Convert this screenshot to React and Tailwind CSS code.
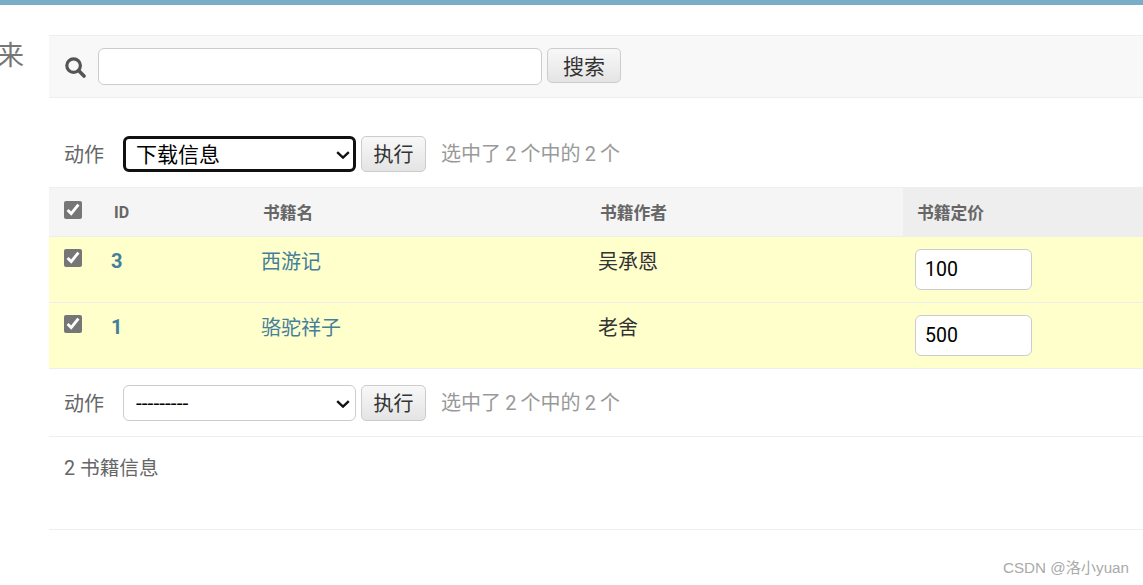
import React from 'react';

const books = [
  { id: 3, name: '西游记', author: '吴承恩', price: '100' },
  { id: 1, name: '骆驼祥子', author: '老舍', price: '500' },
];

const Check = () => (
  <input
    type="checkbox"
    defaultChecked
    className="block w-[18px] h-[18px] m-0 accent-[#767676]"
  />
);

const ActionBar = ({ focused, value, options }) => (
  <div className="flex items-center h-9 pl-[15px]">
    <span className="text-[20px] text-[#666] w-[59px] leading-none pt-[1px]">动作</span>
    <div className="relative w-[233px] h-9">
      <select
        defaultValue={value}
        className={`appearance-none block w-full h-full pt-[1px] rounded-[6px] bg-white text-black text-[21px] ${
          focused ? 'border-[3px] border-[#111] pl-[10px]' : 'border border-[#ccc] pl-[12px]'
        }`}
      >
        {options.map((o) => (
          <option key={o}>{o}</option>
        ))}
      </select>
      <svg className="absolute right-[6px] top-[15px] pointer-events-none" width="14" height="8" viewBox="0 0 14 8" fill="none">
        <path d="M1.2 1.2 L7 6.6 L12.8 1.2" stroke="#111" strokeWidth="2.4" />
      </svg>
    </div>
    <button className="ml-[5px] w-[65px] h-9 pt-[1px] rounded-[5px] border border-[#ccc] bg-gradient-to-b from-[#f8f8f8] to-[#e4e4e4] text-[20px] text-[#333]">
      执行
    </button>
    <span className="ml-[15px] text-[20px] text-[#999] leading-none whitespace-nowrap [word-spacing:-0.8px]">
      选中了 2 个中的 2 个
    </span>
  </div>
);

export default function App() {
  return (
    <div className="w-[1143px] h-[585px] overflow-hidden bg-white font-['Roboto','Noto_Sans_CJK_SC',sans-serif]">
      <div className="h-[5px] bg-[#79aec8]" />
      <div className="flex">
        <div className="w-[49px] shrink-0 overflow-hidden">
          <div className="-ml-[3px] mt-[32px] text-[27px] leading-[38px] text-[#777]">来</div>
        </div>

        <div className="w-[1094px] shrink-0">
          <div className="mt-[30px] h-[63px] flex items-center pl-[16px] bg-[#f8f8f8] border-y border-[#eee]">
            <svg className="mt-[2px]" width="21" height="21" viewBox="0 0 21 21" fill="none">
              <circle cx="8.6" cy="8.6" r="6.8" stroke="#555" strokeWidth="3.2" />
              <path d="M13.6 13.6 L19 19" stroke="#555" strokeWidth="3.6" strokeLinecap="round" />
            </svg>
            <input className="ml-[12px] w-[444px] h-[37px] rounded-[6px] border border-[#ccc] bg-white" />
            <button className="ml-[5px] w-[74px] h-[35px] -mt-[2px] pt-[3px] rounded-[5px] border border-[#ccc] bg-gradient-to-b from-[#f8f8f8] to-[#e4e4e4] text-[21px] text-[#333]">
              搜索
            </button>
          </div>

          <div className="mt-[38px]">
            <ActionBar focused value="下载信息" options={['---------', '下载信息']} />
          </div>

          <table className="mt-[15px] w-[1094px] table-fixed border-collapse">
            <thead>
              <tr className="h-[49px] bg-[#f5f5f5] border-y border-[#eee] text-[16.8px] font-bold text-[#666] text-left">
                <th className="w-[50px] pl-[15px] align-top pt-[13px]">
                  <Check />
                </th>
                <th className="w-[150px] pl-[15px] pt-[1px] text-[16px]">ID</th>
                <th className="w-[337px] pl-[14px] pt-[4px]">书籍名</th>
                <th className="w-[317px] pl-[14px] pt-[4px]">书籍作者</th>
                <th className="pl-[14px] pt-[4px] bg-[#eee]">书籍定价</th>
              </tr>
            </thead>
            <tbody>
              {books.map((b) => (
                <tr key={b.id} className="h-[66px] bg-[#ffc] border-b border-[#eee] text-left align-top">
                  <td className="pl-[15px] pt-[12px]">
                    <Check />
                  </td>
                  <td className="pl-[12px] pt-[11px] text-[20px] leading-[26px] font-bold text-[#447e9b]">
                    {b.id}
                  </td>
                  <td className="pl-[12px] pt-[12px] text-[20px] leading-[26px] text-[#447e9b]">
                    {b.name}
                  </td>
                  <td className="pl-[12px] pt-[12px] text-[20px] leading-[26px] text-[#333]">
                    {b.author}
                  </td>
                  <td className="pl-[12px] pt-[12px]">
                    <input
                      defaultValue={b.price}
                      className="block w-[117px] h-[41px] px-[9px] rounded-[6px] border border-[#ccc] bg-white text-[19.5px] text-black"
                    />
                  </td>
                </tr>
              ))}
            </tbody>
          </table>

          <div className="mt-[16px]">
            <ActionBar value="---------" options={['---------', '下载信息']} />
          </div>

          <div className="mt-[15px] h-[94px] pl-[15px] pt-[19px] border-y border-[#eee] text-[19.7px] leading-[26px] text-[#666]">
            2 书籍信息
          </div>
        </div>
      </div>

      <div className="mt-[28px] pr-[14px] text-right text-[15.2px] leading-[20px] text-[#aaa] font-['Liberation_Sans','Noto_Sans_CJK_SC',sans-serif]">
        CSDN @洛小yuan
      </div>
    </div>
  );
}
